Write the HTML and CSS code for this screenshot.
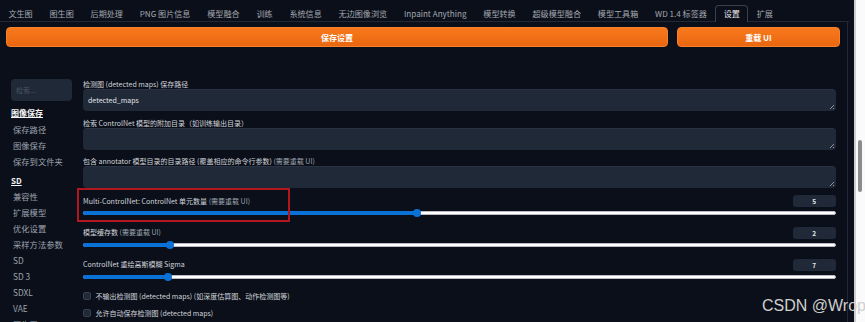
FILE: index.html
```html
<!DOCTYPE html>
<html lang="zh-CN">
<head>
    <meta charset="UTF-8">
    <meta name="viewport" content="width=device-width, initial-scale=1.0">
    <title>设置</title>
    <link rel="stylesheet" href="styles.css">
</head>
<body>
    <div class="app">
        <!-- Top tab bar -->
        <nav class="tabs">
            <span class="tab">文生图</span>
            <span class="tab">图生图</span>
            <span class="tab">后期处理</span>
            <span class="tab">PNG 图片信息</span>
            <span class="tab">模型融合</span>
            <span class="tab">训练</span>
            <span class="tab">系统信息</span>
            <span class="tab">无边图像浏览</span>
            <span class="tab">Inpaint Anything</span>
            <span class="tab">模型转换</span>
            <span class="tab">超级模型融合</span>
            <span class="tab">模型工具箱</span>
            <span class="tab">WD 1.4 标签器</span>
            <span class="tab active">设置</span>
            <span class="tab">扩展</span>
        </nav>

        <div class="panel">
            <div class="actions">
                <button class="btn-primary btn-save">保存设置</button>
                <button class="btn-primary btn-reload">重载 UI</button>
            </div>

            <div class="settings">
                <!-- Section list -->
                <aside class="sidebar">
                    <input class="search" type="text" placeholder="检索...">
                    <div class="group-title">图像保存</div>
                    <div class="nav-item">保存路径</div>
                    <div class="nav-item">图像保存</div>
                    <div class="nav-item">保存到文件夹</div>
                    <div class="group-title group-sd">SD</div>
                    <div class="nav-item">兼容性</div>
                    <div class="nav-item">扩展模型</div>
                    <div class="nav-item">优化设置</div>
                    <div class="nav-item">采样方法参数</div>
                    <div class="nav-item">SD</div>
                    <div class="nav-item">SD 3</div>
                    <div class="nav-item">SDXL</div>
                    <div class="nav-item">VAE</div>
                    <div class="nav-item">图生图</div>
                </aside>

                <!-- ControlNet options -->
                <main class="main">
                    <div class="field">
                        <label class="field-label">检测图 (detected maps) 保存路径</label>
                        <div class="textbox">detected_maps</div>
                    </div>
                    <div class="field">
                        <label class="field-label">检索 ControlNet 模型的附加目录（如训练输出目录）</label>
                        <div class="textbox"></div>
                    </div>
                    <div class="field">
                        <label class="field-label">包含 annotator 模型目录的目录路径 (覆盖相应的命令行参数) <span class="hint">(需要重载 UI)</span></label>
                        <div class="textbox"></div>
                    </div>

                    <div class="slider-field marked">
                        <div class="slider-head">
                            <span class="field-label">Multi-ControlNet: ControlNet 单元数量 <span class="hint">(需要重载 UI)</span></span>
                            <span class="num">5</span>
                        </div>
                        <div class="track"><div class="fill" style="width: 44.5%"></div></div>
                        <div class="mark-box"></div>
                    </div>
                    <div class="slider-field">
                        <div class="slider-head">
                            <span class="field-label">模型缓存数 <span class="hint">(需要重载 UI)</span></span>
                            <span class="num">2</span>
                        </div>
                        <div class="track"><div class="fill" style="width: 11.6%"></div></div>
                    </div>
                    <div class="slider-field">
                        <div class="slider-head">
                            <span class="field-label">ControlNet 重绘高斯模糊 Sigma</span>
                            <span class="num">7</span>
                        </div>
                        <div class="track"><div class="fill" style="width: 11.3%"></div></div>
                    </div>

                    <div class="checks">
                        <label class="check"><span class="box"></span>不输出检测图 (detected maps) (如深度估算图、动作检测图等)</label>
                        <label class="check"><span class="box"></span>允许自动保存检测图 (detected maps)</label>
                    </div>
                </main>
            </div>
        </div>
    </div>

    <div class="scrollbar"><div class="thumb"></div></div>
    <div class="watermark">CSDN @Wrop</div>
</body>
</html>
```

FILE: styles.css
```css
* {
    box-sizing: border-box;
}
html, body {
    margin: 0;
    height: 100%;
}
body {
    background-color: #0b0f19;
    font-family: "Noto Sans CJK SC", "Noto Sans", sans-serif;
    color: #d1d5db;
    overflow: hidden;
    position: relative;
}
.app {
    width: 854px;
    height: 322px;
}

/* Tabs */
.tabs {
    display: flex;
    height: 22px;
    padding-top: 5px;
    border-bottom: 1px solid #1f2937;
    width: 849px;
}
.tab {
    height: 17px;
    line-height: 15px;
    padding: 0 7.4px;
    font-size: 8.1px;
    color: #a3a8b1;
    border: 1px solid transparent;
    border-bottom: none;
    white-space: nowrap;
}
.tab.active {
    color: #e5e7eb;
    border-color: #374151;
    border-radius: 4px 4px 0 0;
    background-color: #0b0f19;
}

/* Panel */
.panel {
    width: 848px;
    height: 300px;
    padding: 5px 7px 0 6px;
    border-right: 1px solid #1f2937;
}
.actions {
    display: flex;
    gap: 9px;
}
.btn-primary {
    height: 20px;
    border: 1px solid #f5812a;
    border-radius: 4px;
    background: linear-gradient(to bottom, #f87a1c, #ea6610);
    color: #fff;
    font-family: inherit;
    font-size: 8px;
    font-weight: bold;
    padding: 0;
}
.btn-save {
    flex: 1;
}
.btn-reload {
    width: 163px;
}

.settings {
    display: flex;
    margin-top: 32px;
}

/* Sidebar */
.sidebar {
    width: 62px;
    margin-left: 5px;
    flex-shrink: 0;
}
.search {
    display: block;
    width: 61px;
    height: 21.5px;
    border: none;
    border-radius: 4px;
    background-color: #1f2937;
    padding: 0 5px;
    font-family: inherit;
    font-size: 7px;
    color: #d1d5db;
}
.search::placeholder {
    color: #4b5563;
}
.group-title {
    margin-top: 4px;
    line-height: 16px;
    font-size: 8px;
    font-weight: bold;
    color: #f3f4f6;
    text-decoration: underline;
}
.group-sd {
    margin-top: 5px;
    line-height: 14px;
}
.nav-item {
    padding-left: 2px;
    line-height: 16px;
    font-size: 8.3px;
    color: #9ca3af;
    white-space: nowrap;
}

/* Main column */
.main {
    flex: 1;
    margin-left: 10px;
    margin-right: 4px;
    padding-top: 1px;
    display: flex;
    flex-direction: column;
}
.field-label {
    display: block;
    line-height: 9px;
    font-size: 7px;
    color: #d1d5db;
    white-space: nowrap;
}
.hint {
    color: #9ca3af;
}
.field + .field {
    margin-top: 7.5px;
}
.textbox {
    position: relative;
    height: 22px;
    border-radius: 4px;
    background-color: #202938;
    border-top: 1px solid #2a3343;
    padding: 0 5px;
    line-height: 21px;
    font-size: 7px;
    color: #e5e7eb;
}
.textbox::after {
    content: "";
    position: absolute;
    right: 2px;
    bottom: 2px;
    width: 4px;
    height: 4px;
    background: linear-gradient(135deg, transparent 50%, #8b929c 50%, #8b929c 62%, transparent 62%, transparent 78%, #8b929c 78%);
}

/* Sliders */
.slider-field {
    position: relative;
    margin-top: 7px;
}
.slider-field + .slider-field {
    margin-top: 11.5px;
}
.slider-head {
    display: flex;
    justify-content: space-between;
    align-items: center;
    height: 12px;
}
.slider-head .field-label {
    display: inline;
}
.num {
    width: 43.5px;
    height: 12px;
    border-radius: 3px;
    background-color: #1f2937;
    text-align: center;
    line-height: 12px;
    font-size: 6.5px;
    font-weight: bold;
    color: #e5e7eb;
}
.track {
    position: relative;
    margin-top: 4.3px;
    height: 4px;
    border-radius: 2px;
    background-color: #fff;
    border: 1px solid #b9bcc2;
}
.fill {
    position: absolute;
    left: -1px;
    top: -1px;
    height: 4px;
    border-radius: 2px;
    background-color: #0a72d6;
}
.fill::after {
    content: "";
    position: absolute;
    right: -4px;
    top: -2px;
    width: 8px;
    height: 8px;
    border-radius: 50%;
    background-color: #0a72d6;
}
.mark-box {
    position: absolute;
    left: -6px;
    top: -7px;
    width: 213px;
    height: 34px;
    border: 2px solid #b3161d;
}

/* Checkboxes */
.checks {
    margin-top: 8.5px;
}
.check {
    display: flex;
    align-items: center;
    height: 17px;
    font-size: 7px;
    color: #d1d5db;
    white-space: nowrap;
}
.box {
    width: 8px;
    height: 8px;
    margin-right: 4.5px;
    border-radius: 2px;
    background-color: #1f2937;
    border: 1px solid #374151;
}

/* Browser chrome bits */
.scrollbar {
    position: absolute;
    left: 854px;
    top: 0;
    width: 11px;
    height: 322px;
    background-color: #fafafa;
    border-left: 2px solid #cfcfcf;
}
.thumb {
    position: absolute;
    left: 2px;
    top: 140px;
    width: 4px;
    height: 52px;
    border-radius: 2px;
    background-color: #8c8c8c;
}
.watermark {
    position: absolute;
    left: 762px;
    top: 298px;
    font-family: "Liberation Sans", Arial, sans-serif;
    font-size: 16px;
    line-height: 16px;
    color: #cfcfcf;
    white-space: nowrap;
    z-index: 10;
}
```
